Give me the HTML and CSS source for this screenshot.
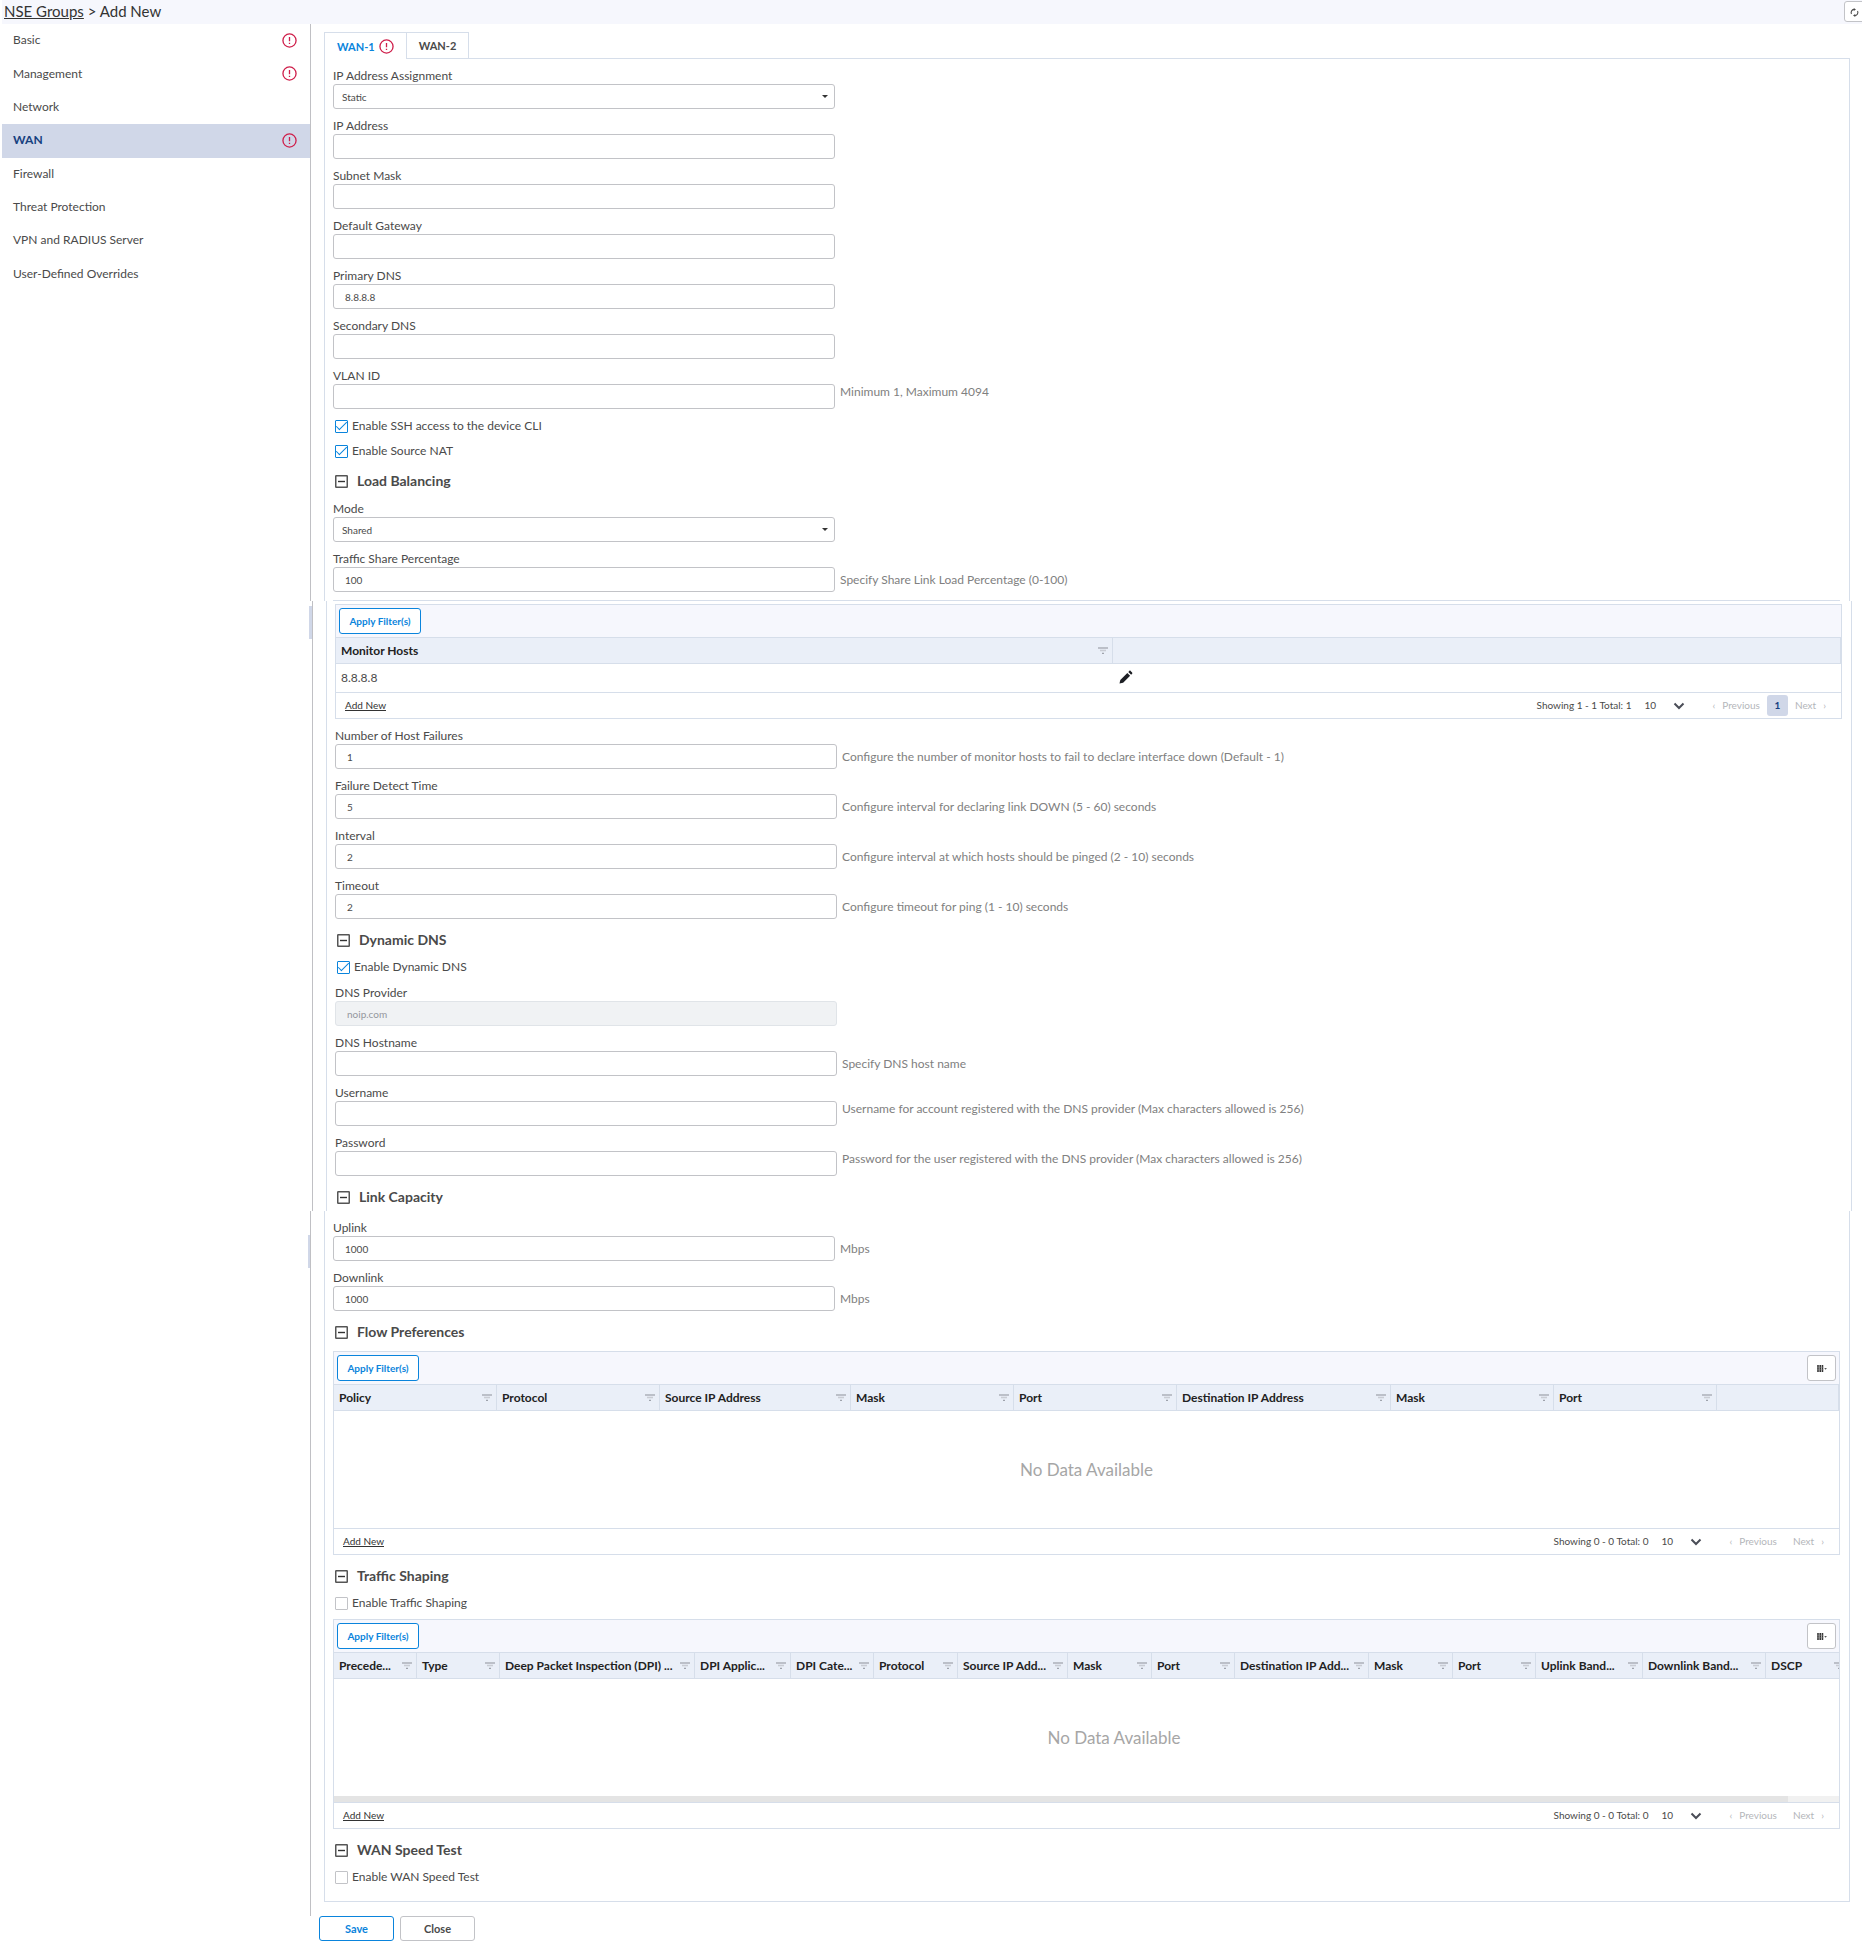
FILE: index.html
```html
<!DOCTYPE html>
<html lang="en">
<head>
  <meta charset="UTF-8">
  <meta name="viewport" content="width=device-width, initial-scale=1.0">
  <title>NSE Groups - Add New</title>
  <link rel="stylesheet" href="styles.css">
</head>
<body>
  <!-- icon sprite -->
  <svg class="sprite" aria-hidden="true">
    <symbol id="i-alert" viewBox="0 0 16 16">
      <circle cx="8" cy="8" r="7" fill="none" stroke="#cf1f4b" stroke-width="1.4"/>
      <path d="M8 4.2v4.6M8 10.4v1.4" stroke="#cf1f4b" stroke-width="1.4"/>
    </symbol>
    <symbol id="i-filter" viewBox="0 0 10 7">
      <path d="M0 1h10" stroke="#8d9099" stroke-width="1"/>
      <path d="M2 3.5h6" stroke="#c9ccd4" stroke-width="1.6"/>
      <path d="M4 6.3h2" stroke="#8d9099" stroke-width="1"/>
    </symbol>
    <symbol id="i-minus" viewBox="0 0 13 13">
      <rect x="0.75" y="0.75" width="11.5" height="11.5" rx="0.5" fill="none" stroke="#555" stroke-width="1.5"/>
      <path d="M3 6.5h7" stroke="#333" stroke-width="1.4"/>
    </symbol>
    <symbol id="i-chevron" viewBox="0 0 12 8">
      <path d="M1.5 1.5L6 6l4.5-4.5" fill="none" stroke="#4a4d57" stroke-width="2"/>
    </symbol>
    <symbol id="i-columns" viewBox="0 0 11 9">
      <path d="M1 0v8M3.5 0v8M6 0v8" stroke="#333" stroke-width="1.8"/>
      <path d="M0 2.6h7M0 5.3h7" stroke="#999" stroke-width="0.5"/>
      <path d="M8 3.5h3l-1.5 1.8z" fill="#555"/>
    </symbol>
    <symbol id="i-pencil" viewBox="0 0 14 14">
      <path d="M0.5 13.5l0.8-3.6 7-7 2.8 2.8-7 7z" fill="#1d1f24"/>
      <path d="M9.3 1.9l1-1c0.4-0.4 0.9-0.4 1.3 0l1.5 1.5c0.4 0.4 0.4 0.9 0 1.3l-1 1z" fill="#1d1f24"/>
    </symbol>
    <symbol id="i-refresh" viewBox="0 0 10 10">
      <path d="M1.6 6.6A3.6 3.6 0 0 1 4.4 1.5M8.4 3.4A3.6 3.6 0 0 1 5.6 8.5" fill="none" stroke="#4a4a4a" stroke-width="1.2"/>
      <path d="M4.2 0l2.4 1.6-2.4 1.6zM5.8 10L3.4 8.4l2.4-1.6z" fill="#4a4a4a"/>
    </symbol>
  </svg>

  <header class="topbar">
    <div class="breadcrumb"><a href="#">NSE Groups</a> &gt; Add New</div>
    <button class="refresh" type="button" aria-label="Refresh"><svg width="9" height="9"><use href="#i-refresh"/></svg></button>
  </header>

  <div class="layout">
    <nav class="sidebar">
      <a href="#">Basic <svg class="alert"><use href="#i-alert"/></svg></a>
      <a href="#">Management <svg class="alert"><use href="#i-alert"/></svg></a>
      <a href="#">Network</a>
      <a href="#" class="active">WAN <svg class="alert"><use href="#i-alert"/></svg></a>
      <a href="#">Firewall</a>
      <a href="#">Threat Protection</a>
      <a href="#">VPN and RADIUS Server</a>
      <a href="#">User-Defined Overrides</a>
    </nav>

    <main class="main">
      <section class="segment first">
        <div class="tabs">
          <button type="button" class="tab active">WAN-1 <svg class="alert"><use href="#i-alert"/></svg></button>
          <button type="button" class="tab">WAN-2</button>
        </div>
        <div class="panel">
          <div class="field">
            <label for="ipAssign">IP Address Assignment</label>
            <div class="row">
              <span class="select"><select id="ipAssign"><option>Static</option></select></span>
            </div>
          </div>
          <div class="field">
            <label for="ipAddress">IP Address</label>
            <div class="row"><input type="text" id="ipAddress"></div>
          </div>
          <div class="field">
            <label for="subnet">Subnet Mask</label>
            <div class="row"><input type="text" id="subnet"></div>
          </div>
          <div class="field">
            <label for="gateway">Default Gateway</label>
            <div class="row"><input type="text" id="gateway"></div>
          </div>
          <div class="field">
            <label for="dns1">Primary DNS</label>
            <div class="row"><input type="text" id="dns1" value="8.8.8.8"></div>
          </div>
          <div class="field">
            <label for="dns2">Secondary DNS</label>
            <div class="row"><input type="text" id="dns2"></div>
          </div>
          <div class="field">
            <label for="vlan">VLAN ID</label>
            <div class="row top"><input type="text" id="vlan"><span class="hint">Minimum 1, Maximum 4094</span></div>
          </div>
          <label class="check"><input type="checkbox" checked>Enable SSH access to the device CLI</label>
          <label class="check"><input type="checkbox" checked>Enable Source NAT</label>

          <h2><svg><use href="#i-minus"/></svg>Load Balancing</h2>
          <div class="field">
            <label for="mode">Mode</label>
            <div class="row">
              <span class="select"><select id="mode"><option>Shared</option></select></span>
            </div>
          </div>
          <div class="field">
            <label for="share">Traffic Share Percentage</label>
            <div class="row"><input type="text" id="share" value="100"><span class="hint">Specify Share Link Load Percentage (0-100)</span></div>
          </div>
          <hr>
        </div>
      </section>

      <section class="segment shifted marked">
        <div class="panel">
          <div class="grid">
            <div class="toolbar"><button type="button" class="apply">Apply Filter(s)</button></div>
            <table>
              <colgroup><col class="half"><col></colgroup>
              <thead>
                <tr>
                  <th><div><span>Monitor Hosts</span><svg><use href="#i-filter"/></svg></div></th>
                  <th></th>
                </tr>
              </thead>
              <tbody>
                <tr>
                  <td>8.8.8.8</td>
                  <td><button type="button" class="edit" aria-label="Edit"><svg width="14" height="14"><use href="#i-pencil"/></svg></button></td>
                </tr>
              </tbody>
            </table>
            <div class="foot">
              <a href="#">Add New</a>
              <span class="total">Showing 1 - 1 Total: 1</span>
              <span class="size"><select aria-label="Rows per page"><option>10</option></select><svg><use href="#i-chevron"/></svg></span>
              <button type="button" class="prev" disabled><i>&lsaquo;</i>Previous</button>
              <button type="button" class="page">1</button>
              <button type="button" class="next" disabled>Next<i>&rsaquo;</i></button>
            </div>
          </div>

          <div class="field">
            <label for="failures">Number of Host Failures</label>
            <div class="row"><input type="text" id="failures" value="1"><span class="hint">Configure the number of monitor hosts to fail to declare interface down (Default - 1)</span></div>
          </div>
          <div class="field">
            <label for="detect">Failure Detect Time</label>
            <div class="row"><input type="text" id="detect" value="5"><span class="hint">Configure interval for declaring link DOWN (5 - 60) seconds</span></div>
          </div>
          <div class="field">
            <label for="interval">Interval</label>
            <div class="row"><input type="text" id="interval" value="2"><span class="hint">Configure interval at which hosts should be pinged (2 - 10) seconds</span></div>
          </div>
          <div class="field">
            <label for="timeout">Timeout</label>
            <div class="row"><input type="text" id="timeout" value="2"><span class="hint">Configure timeout for ping (1 - 10) seconds</span></div>
          </div>

          <h2><svg><use href="#i-minus"/></svg>Dynamic DNS</h2>
          <label class="check"><input type="checkbox" checked>Enable Dynamic DNS</label>
          <div class="field">
            <label for="provider">DNS Provider</label>
            <div class="row"><input type="text" id="provider" value="noip.com" disabled></div>
          </div>
          <div class="field">
            <label for="hostname">DNS Hostname</label>
            <div class="row"><input type="text" id="hostname"><span class="hint">Specify DNS host name</span></div>
          </div>
          <div class="field">
            <label for="username">Username</label>
            <div class="row top"><input type="text" id="username"><span class="hint">Username for account registered with the DNS provider (Max characters allowed is 256)</span></div>
          </div>
          <div class="field">
            <label for="password">Password</label>
            <div class="row top"><input type="password" id="password"><span class="hint">Password for the user registered with the DNS provider (Max characters allowed is 256)</span></div>
          </div>

          <h2><svg><use href="#i-minus"/></svg>Link Capacity</h2>
        </div>
      </section>

      <section class="segment last marked">
        <div class="panel">
          <div class="field">
            <label for="uplink">Uplink</label>
            <div class="row"><input type="text" id="uplink" value="1000"><span class="hint">Mbps</span></div>
          </div>
          <div class="field">
            <label for="downlink">Downlink</label>
            <div class="row"><input type="text" id="downlink" value="1000"><span class="hint">Mbps</span></div>
          </div>

          <h2><svg><use href="#i-minus"/></svg>Flow Preferences</h2>
          <div class="grid">
            <div class="toolbar">
              <button type="button" class="apply">Apply Filter(s)</button>
              <button type="button" class="columns" aria-label="Columns"><svg width="10" height="8"><use href="#i-columns"/></svg></button>
            </div>
            <table>
              <colgroup><col class="w163"><col class="w163"><col class="w191"><col class="w163"><col class="w163"><col class="w214"><col class="w163"><col class="w163"><col></colgroup>
              <thead>
                <tr>
                  <th><div><span>Policy</span><svg><use href="#i-filter"/></svg></div></th>
                  <th><div><span>Protocol</span><svg><use href="#i-filter"/></svg></div></th>
                  <th><div><span>Source IP Address</span><svg><use href="#i-filter"/></svg></div></th>
                  <th><div><span>Mask</span><svg><use href="#i-filter"/></svg></div></th>
                  <th><div><span>Port</span><svg><use href="#i-filter"/></svg></div></th>
                  <th><div><span>Destination IP Address</span><svg><use href="#i-filter"/></svg></div></th>
                  <th><div><span>Mask</span><svg><use href="#i-filter"/></svg></div></th>
                  <th><div><span>Port</span><svg><use href="#i-filter"/></svg></div></th>
                  <th></th>
                </tr>
              </thead>
              <tbody>
                <tr><td colspan="9" class="empty">No Data Available</td></tr>
              </tbody>
            </table>
            <div class="foot">
              <a href="#">Add New</a>
              <span class="total">Showing 0 - 0 Total: 0</span>
              <span class="size"><select aria-label="Rows per page"><option>10</option></select><svg><use href="#i-chevron"/></svg></span>
              <button type="button" class="prev" disabled><i>&lsaquo;</i>Previous</button>
              <button type="button" class="next" disabled>Next<i>&rsaquo;</i></button>
            </div>
          </div>

          <h2><svg><use href="#i-minus"/></svg>Traffic Shaping</h2>
          <label class="check"><input type="checkbox">Enable Traffic Shaping</label>
          <div class="grid">
            <div class="toolbar">
              <button type="button" class="apply">Apply Filter(s)</button>
              <button type="button" class="columns" aria-label="Columns"><svg width="10" height="8"><use href="#i-columns"/></svg></button>
            </div>
            <div class="scroller">
              <table class="wide">
                <colgroup><col class="w83"><col class="w83"><col class="w195"><col class="w96"><col class="w83"><col class="w84"><col class="w110"><col class="w84"><col class="w83"><col class="w134"><col class="w84"><col class="w83"><col class="w107"><col class="w123"><col class="w83"><col></colgroup>
                <thead>
                  <tr>
                    <th><div><span>Precede...</span><svg><use href="#i-filter"/></svg></div></th>
                    <th><div><span>Type</span><svg><use href="#i-filter"/></svg></div></th>
                    <th><div><span>Deep Packet Inspection (DPI) ...</span><svg><use href="#i-filter"/></svg></div></th>
                    <th><div><span>DPI Applic...</span><svg><use href="#i-filter"/></svg></div></th>
                    <th><div><span>DPI Cate...</span><svg><use href="#i-filter"/></svg></div></th>
                    <th><div><span>Protocol</span><svg><use href="#i-filter"/></svg></div></th>
                    <th><div><span>Source IP Add...</span><svg><use href="#i-filter"/></svg></div></th>
                    <th><div><span>Mask</span><svg><use href="#i-filter"/></svg></div></th>
                    <th><div><span>Port</span><svg><use href="#i-filter"/></svg></div></th>
                    <th><div><span>Destination IP Add...</span><svg><use href="#i-filter"/></svg></div></th>
                    <th><div><span>Mask</span><svg><use href="#i-filter"/></svg></div></th>
                    <th><div><span>Port</span><svg><use href="#i-filter"/></svg></div></th>
                    <th><div><span>Uplink Band...</span><svg><use href="#i-filter"/></svg></div></th>
                    <th><div><span>Downlink Band...</span><svg><use href="#i-filter"/></svg></div></th>
                    <th><div><span>DSCP</span><svg><use href="#i-filter"/></svg></div></th>
                    <th></th>
                  </tr>
                </thead>
                <tbody>
                  <tr><td colspan="16" class="empty">No Data Available</td></tr>
                </tbody>
              </table>
            </div>
            <div class="scrollbar"><div class="thumb"></div></div>
            <div class="foot">
              <a href="#">Add New</a>
              <span class="total">Showing 0 - 0 Total: 0</span>
              <span class="size"><select aria-label="Rows per page"><option>10</option></select><svg><use href="#i-chevron"/></svg></span>
              <button type="button" class="prev" disabled><i>&lsaquo;</i>Previous</button>
              <button type="button" class="next" disabled>Next<i>&rsaquo;</i></button>
            </div>
          </div>

          <h2><svg><use href="#i-minus"/></svg>WAN Speed Test</h2>
          <label class="check"><input type="checkbox">Enable WAN Speed Test</label>
        </div>
      </section>

      <div class="actions">
        <button type="button" class="btn primary">Save</button>
        <button type="button" class="btn">Close</button>
      </div>
    </main>
  </div>
</body>
</html>
```
FILE: styles.css
```css
:root {
  --blue: #0a84dc;
  --navy: #16407f;
  --text: #4a4a4a;
  --muted: #808080;
  --line: #d6deea;
  --control: #c2c3c7;
  --bar: #f6f7fd;
  --head: #eaeff8;
  --selected: #d0d7e8;
}

* {
  box-sizing: border-box;
}

body {
  margin: 0;
  background: #fff;
  color: var(--text);
  font-family: Lato, "Liberation Sans", sans-serif;
  font-size: 12px;
  line-height: 16px;
}

button,
input,
select {
  font-family: inherit;
  color: inherit;
  margin: 0;
}

button {
  cursor: pointer;
}

.sprite {
  display: none;
}

.topbar {
  display: flex;
  justify-content: space-between;
  height: 24px;
  margin-left: 2px;
  padding-left: 2px;
  background: var(--bar);
  overflow: hidden;
}

.breadcrumb {
  font-size: 15px;
  line-height: 22px;
  color: #333;
}

.breadcrumb a {
  color: inherit;
}

.refresh {
  flex: none;
  width: 24px;
  height: 21px;
  margin: 1px -6px 0 0;
  padding: 0 0 0 5px;
  border: 1px solid var(--control);
  border-radius: 3px;
  background: #fff;
  text-align: left;
  line-height: 10px;
}

.layout {
  display: flex;
}

/* sidebar */
.sidebar {
  flex: none;
  width: 310px;
  height: 267px;
  padding-left: 2px;
  display: grid;
  grid-auto-rows: 1fr;
}

.sidebar a {
  display: flex;
  align-items: center;
  justify-content: space-between;
  padding: 0 13px 1px 11px;
  color: var(--text);
  text-decoration: none;
}

.sidebar a.active {
  background: var(--selected);
  color: var(--navy);
  font-weight: bold;
}

.alert {
  width: 15px;
  height: 15px;
}

/* main column */
.main {
  flex: 1;
  min-width: 0;
}

.segment {
  position: relative;
  border-left: 1px solid #c0c0c4;
  padding: 0 12px 0 13px;
}

.segment.first {
  padding-top: 8px;
}

.segment.shifted {
  margin: 0 -2px 0 2px;
}

.segment.last {
  padding-bottom: 14px;
}

.segment.marked::before {
  content: "";
  position: absolute;
  left: -4px;
  top: 5px;
  width: 3px;
  height: 33px;
  background: var(--selected);
}

.segment.last.marked::before {
  left: -3px;
  top: 24px;
  width: 2px;
}

.tabs {
  display: flex;
  border-bottom: 1px solid var(--line);
}

.tab {
  display: flex;
  align-items: center;
  gap: 4px;
  height: 26px;
  padding: 0 12px;
  border: 1px solid var(--line);
  border-width: 1px 1px 0 0;
  background: #fff;
  font-size: 12px;
  font-weight: bold;
}

.tab.active {
  height: 27px;
  margin-bottom: -1px;
  border-left-width: 1px;
  color: var(--blue);
}

.tab {
  font-size: 11px;
}

.panel {
  border: 1px solid var(--line);
  border-width: 0 1px;
  padding: 0 9px 0 8px;
}

.shifted .panel {
  padding: 3px 9px 3px 8px;
}

.last .panel {
  padding-bottom: 15px;
  border-bottom-width: 1px;
}

hr {
  margin: 8px 0 0;
  border: 0;
  border-top: 1px solid var(--line);
}

h2 {
  display: flex;
  align-items: center;
  gap: 9px;
  margin: 0;
  padding: 11px 0 1px 2px;
  font-size: 14px;
  line-height: 20px;
  font-weight: bold;
}

h2 svg {
  width: 13px;
  height: 13px;
}

/* form */
.field {
  padding-top: 9px;
}

.field label {
  display: block;
}

.row {
  display: flex;
  align-items: center;
  gap: 5px;
}

.row.top {
  align-items: flex-start;
}

.hint {
  color: var(--muted);
}

.field input,
.field select {
  display: block;
  width: 502px;
  height: 25px;
  padding: 0 11px;
  border: 1px solid var(--control);
  border-radius: 3px;
  background: #fff;
  font-size: 10px;
}

.field input:disabled {
  background: #f0f2f4;
  border-color: #e0e4e8;
  color: #94979d;
}

.field select {
  appearance: none;
  padding: 0 8px;
}

.select {
  position: relative;
}

.select::after {
  content: "";
  position: absolute;
  right: 7px;
  top: 11px;
  border: 3px solid transparent;
  border-top-color: #333;
  border-bottom-width: 0;
  pointer-events: none;
}

.check {
  display: flex;
  align-items: center;
  gap: 4px;
  padding: 7px 0 0 2px;
  line-height: 18px;
}

.field + .check {
  padding-top: 8px;
}

.check input {
  appearance: none;
  display: grid;
  place-items: center;
  width: 13px;
  height: 13px;
  border: 1px solid var(--control);
  border-radius: 1px;
  background: #fff;
}

.check input:checked {
  border-color: var(--blue);
}

.check input:checked::after {
  content: "";
  width: 10px;
  height: 4px;
  margin-bottom: 3px;
  border: 1px solid var(--blue);
  border-width: 0 0 1px 1px;
  transform: rotate(-45deg);
}

/* data grid */
.grid {
  margin-top: 8px;
  border: 1px solid var(--line);
}

.check + .grid {
  margin-top: 7px;
}

.shifted .grid {
  margin-top: 0;
}

.toolbar {
  display: flex;
  justify-content: space-between;
  height: 32px;
  padding: 3px;
  background: var(--bar);
}

.apply,
.columns {
  height: 26px;
  border: 1px solid var(--blue);
  border-radius: 3px;
  background: #fff;
}

.apply {
  width: 82px;
  padding: 0 0 1px;
  color: var(--blue);
  font-size: 10px;
  font-weight: bold;
}

.columns {
  width: 29px;
  padding: 0;
  border-color: var(--control);
}

table {
  width: 100%;
  table-layout: fixed;
  border-collapse: separate;
  border-spacing: 0;
}

table.wide {
  width: 1560px;
}

.half { width: 51.6%; }
.w83 { width: 83px; }
.w84 { width: 84px; }
.w96 { width: 96px; }
.w107 { width: 107px; }
.w110 { width: 110px; }
.w123 { width: 123px; }
.w134 { width: 134px; }
.w163 { width: 163px; }
.w191 { width: 191px; }
.w195 { width: 195px; }
.w214 { width: 214px; }

th {
  height: 27px;
  padding: 0 4px 0 5px;
  border: 1px solid var(--line);
  border-left: 0;
  background: var(--head);
  color: #222;
  text-align: left;
}

th div {
  display: flex;
  align-items: center;
  justify-content: space-between;
  gap: 2px;
}

th span {
  white-space: nowrap;
}

th svg {
  flex: none;
  width: 10px;
  height: 7px;
}

td {
  height: 28px;
  padding: 0 5px;
}

td.empty {
  height: 117px;
  text-align: center;
  font-size: 17px;
  color: #a6a6a6;
}

.edit {
  display: block;
  padding: 0 1px 2px;
  border: 0;
  background: none;
  line-height: 14px;
}

.edit svg {
  display: block;
}

.scroller {
  overflow: hidden;
}

.scrollbar {
  height: 6px;
  background: #f1f1f1;
}

.thumb {
  width: 96.6%;
  height: 6px;
  background: #e4e4e4;
}

.foot {
  display: flex;
  align-items: center;
  height: 26px;
  padding: 0 15px 1px 9px;
  border-top: 1px solid var(--line);
  font-size: 10px;
}

.foot a {
  margin-right: auto;
  color: #333;
}

.foot select {
  appearance: none;
  width: 42px;
  padding: 0;
  border: 0;
  background: none;
  font-size: 10px;
}

.foot button {
  padding: 0;
  border: 0;
  background: none;
  color: #b4b6ba;
  font-size: 10px;
}

.foot i {
  font-style: normal;
}

.size {
  position: relative;
  margin: 0 26px 0 13px;
}

.size svg {
  position: absolute;
  right: 1px;
  top: 5px;
  width: 12px;
  height: 8px;
  pointer-events: none;
}

.foot .prev i {
  margin-right: 7px;
}

.foot .next {
  margin-left: 16px;
}

.foot .next i {
  margin-left: 7px;
}

.foot .page {
  width: 21px;
  height: 21px;
  margin: 0 -9px 0 7px;
  border-radius: 3px;
  background: var(--selected);
  color: var(--navy);
  font-weight: bold;
}

.actions {
  display: flex;
  gap: 6px;
  padding: 0 0 9px 9px;
}

.btn {
  width: 75px;
  height: 25px;
  padding: 0 0 1px;
  border: 1px solid var(--control);
  border-radius: 3px;
  background: #fff;
  font-size: 11px;
  font-weight: bold;
}

.btn.primary {
  border-color: var(--blue);
  color: var(--blue);
}
```
